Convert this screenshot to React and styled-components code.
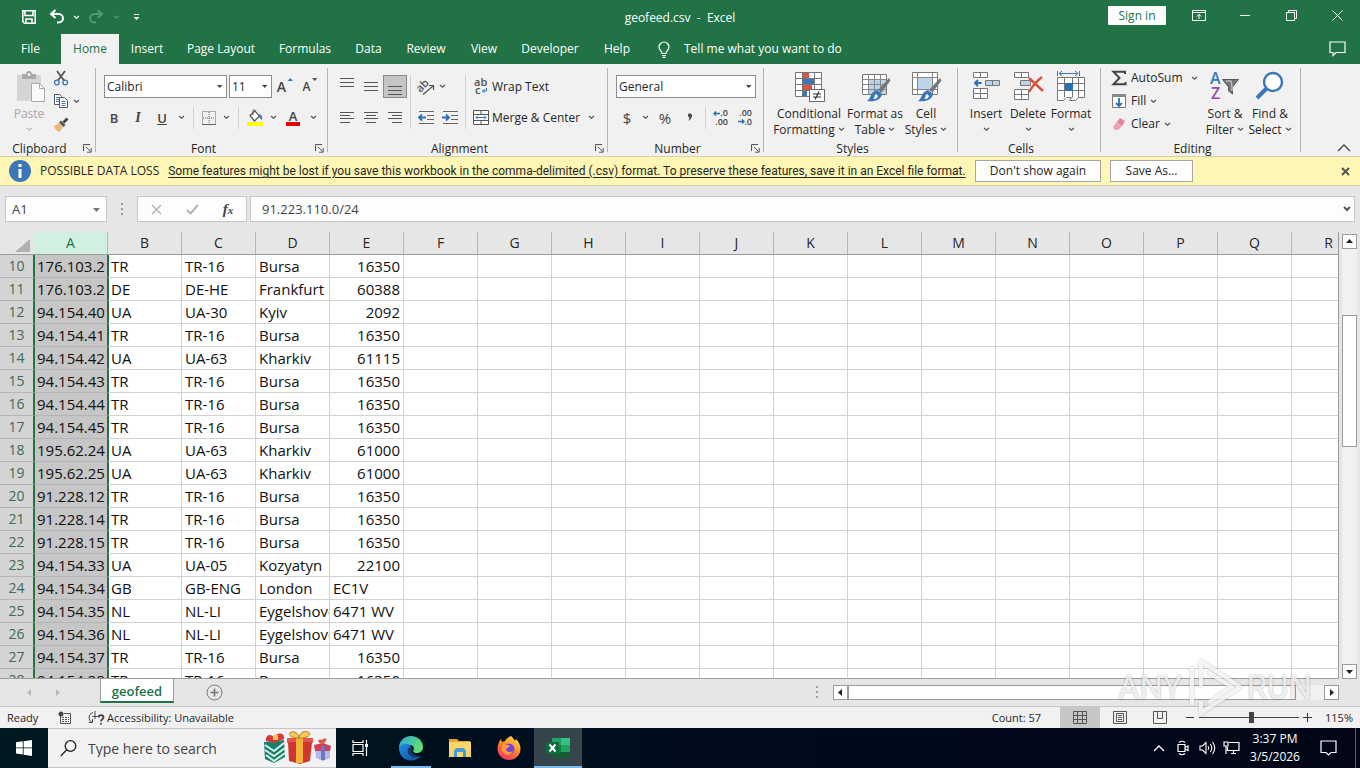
import styled, { createGlobalStyle } from "styled-components";

const COLUMNS = "ABCDEFGHIJKLMNOPQR".split("");

const ROWS = [
  [10, "176.103.2", "TR", "TR-16", "Bursa", 16350],
  [11, "176.103.2", "DE", "DE-HE", "Frankfurt", 60388],
  [12, "94.154.40", "UA", "UA-30", "Kyiv", 2092],
  [13, "94.154.41", "TR", "TR-16", "Bursa", 16350],
  [14, "94.154.42", "UA", "UA-63", "Kharkiv", 61115],
  [15, "94.154.43", "TR", "TR-16", "Bursa", 16350],
  [16, "94.154.44", "TR", "TR-16", "Bursa", 16350],
  [17, "94.154.45", "TR", "TR-16", "Bursa", 16350],
  [18, "195.62.24", "UA", "UA-63", "Kharkiv", 61000],
  [19, "195.62.25", "UA", "UA-63", "Kharkiv", 61000],
  [20, "91.228.12", "TR", "TR-16", "Bursa", 16350],
  [21, "91.228.14", "TR", "TR-16", "Bursa", 16350],
  [22, "91.228.15", "TR", "TR-16", "Bursa", 16350],
  [23, "94.154.33", "UA", "UA-05", "Kozyatyn", 22100],
  [24, "94.154.34", "GB", "GB-ENG", "London", "EC1V"],
  [25, "94.154.35", "NL", "NL-LI", "Eygelshoven", "6471 WV"],
  [26, "94.154.36", "NL", "NL-LI", "Eygelshoven", "6471 WV"],
  [27, "94.154.37", "TR", "TR-16", "Bursa", 16350],
  [28, "94.154.38", "TR", "TR-16", "Bursa", 16350],
];

const TABS = [
  ["File", 61],
  ["Home", 58],
  ["Insert", 56],
  ["Page Layout", 92],
  ["Formulas", 76],
  ["Data", 51],
  ["Review", 64],
  ["View", 52],
  ["Developer", 80],
  ["Help", 54],
];

/* icons */

const Svg = ({ w = 16, h = w, children, ...rest }) => (
  <svg
    width={w}
    height={h}
    viewBox={`0 0 ${w} ${h}`}
    fill="none"
    stroke="currentColor"
    aria-hidden="true"
    {...rest}
  >
    {children}
  </svg>
);

const Chevron = ({ color = "#555" }) => (
  <Svg w={7} h={5} stroke={color} strokeWidth="1.2">
    <path d="M1 1l2.5 2.3L6 1" />
  </Svg>
);

const Triangle = ({ dir = "down", color = "#222", small }) => {
  const turn = { down: 0, left: 90, up: 180, right: 270 }[dir];
  return (
    <Svg w={9} stroke="none" fill={color}>
      <path
        d={small ? "M2 3h5.500L4.700 6z" : "M1 3h7L4.500 7z"}
        transform={`rotate(${turn} 4.500 4.500)`}
      />
    </Svg>
  );
};

const Dots = () => (
  <Svg w={3} h={13} stroke="none" fill="#9b9b9b">
    <path d="M0 0h2v2H0zM0 5h2v2H0zM0 10h2v2H0z" />
  </Svg>
);

const SaveIcon = () => (
  <Svg strokeWidth="1.600">
    <path d="M1.800 1.800h12.400v12.400H3.500l-1.700-1.700z" />
    <path d="M4 2v4.500h8V2M5 14v-4h6v4" />
  </Svg>
);

const UndoIcon = ({ flip }) => (
  <Svg strokeWidth="2">
    <g transform={flip ? "translate(16 0) scale(-1 1)" : undefined}>
      <path d="M6.500 1L2 5l4.500 4" />
      <path d="M2 5h7.500c6 0 6 8.500 0 8.500H8" />
    </g>
  </Svg>
);

const CustomizeIcon = () => (
  <Svg w={7} h={8}>
    <path d="M1 1.500h5" />
    <path d="M.5 4h6L3.500 7z" fill="currentColor" stroke="none" />
  </Svg>
);

const RibbonOptionsIcon = () => (
  <Svg w={14} h={11}>
    <path d="M.5.5h13v10H.5zM.5 2.500h13M7 9V4.500M4.800 6.500L7 4.300l2.200 2.200" />
  </Svg>
);

const BulbIcon = () => (
  <Svg w={12} h={17} strokeWidth="1.200">
    <path d="M4 12.500c0-2.500-3-3.200-3-6.500a5 5 0 0 1 10 0c0 3.300-3 4-3 6.500zM4 14.500h4M4.500 16.400h3" />
  </Svg>
);

const CommentIcon = () => (
  <Svg w={17} h={15} strokeWidth="1.200">
    <path d="M1 1h15v10.500H7l-3 3v-3H1z" />
  </Svg>
);

const PasteIcon = () => (
  <Svg w={32} stroke="none">
    <path d="M4 4h24v26H4z" fill="#d6d4d6" />
    <path d="M9 3h4a3 3 0 0 1 6 0h4v5H9z" fill="#a9a9a9" />
    <circle cx="16" cy="3.500" r="1.500" fill="#f1f1f1" />
    <path d="M18.500 12.500h8l5 5v13h-13z" fill="#fafafa" stroke="#a9a9a9" />
    <path d="M26.500 12.500v5h5" stroke="#a9a9a9" />
  </Svg>
);

const CutIcon = () => (
  <Svg>
    <path d="M4 1l7.500 10M12 1L4.500 11" stroke="#555" strokeWidth="1.800" />
    <circle cx="3.800" cy="12.500" r="2.300" stroke="#3b76b8" strokeWidth="1.300" />
    <circle cx="12.200" cy="12.500" r="2.300" stroke="#3b76b8" strokeWidth="1.300" />
  </Svg>
);

const CopyIcon = () => (
  <Svg stroke="#50565e">
    <path d="M1.500 1.500h5l2 2v8h-7z" fill="#fff" />
    <path d="M6.500 4.500h5l3 3v7h-8z" fill="#fff" />
    <path d="M3 4.500h3M3 6.500h3M3 8.500h3M8.500 8.500h4M8.500 10.500h4M8.500 12.500h4" stroke="#3b76b8" />
  </Svg>
);

const BrushIcon = () => (
  <Svg stroke="none">
    <path d="M1 10l5-3 4 4-3 4.500c-2 .5-5-2-6-5.500z" fill="#e6b979" />
    <path d="M6 6.500l2-2 4.500 4.500-2 2z" fill="#555" />
    <path d="M9.500 5.500l4-4 2 2-4 4z" fill="#444" />
  </Svg>
);

const LauncherIcon = () => (
  <Svg w={9} stroke="#555">
    <path d="M.5 7V.5H7M3 3l4.500 4.500M8.200 4v4.200H4" />
  </Svg>
);

const BordersIcon = () => (
  <Svg w={14} stroke="#666">
    <path d="M.5.5h13v13H.5zM7 1v12M1 7h12" strokeDasharray="1 1" />
    <path d="M0 13.500h14" />
  </Svg>
);

const FillIcon = () => (
  <Svg w={18}>
    <path d="M4 6.500L9 2l4.500 5-5 5z" stroke="#555" fill="#fff" strokeWidth="1.200" />
    <path d="M7 6V1.500c0-1 2-1 2 0V3" stroke="#555" />
    <path d="M13 5c3 1 3.500 3 3 6-1-1-3-2-3-4z" fill="#3b76b8" stroke="none" />
    <path d="M1 13h16v4H1z" fill="#ffff00" stroke="none" />
  </Svg>
);

const AlignIcon = ({ lines }) => (
  <Svg w={16} h={18} stroke="#555">
    {lines.map(([x1, x2, y]) => (
      <path key={y} d={`M${x1} ${y}.5H${x2}`} />
    ))}
  </Svg>
);

const IndentIcon = ({ right }) => (
  <Svg w={17} h={14} stroke="#666">
    <path d="M1 .5h15M9 4.500h7M9 8.500h7M1 12.500h15" />
    <path
      d={right ? "M0 6.500h7M4 3.500l3 3-3 3" : "M1 6.500h7M4 3.500l-3 3 3 3"}
      stroke="#2b6fb5"
      strokeWidth="1.800"
    />
  </Svg>
);

const OrientationIcon = () => (
  <Svg w={18} h={18}>
    <path d="M6 16.500L16 8M12 7.500h4.500V12" stroke="#555" strokeWidth="1.200" />
    <text
      x="2"
      y="14"
      transform="rotate(-45 4 13)"
      fontFamily="Open Sans"
      fontSize="11"
      fontWeight="600"
      fill="#555"
      stroke="none"
    >
      ab
    </text>
  </Svg>
);

const WrapIcon = () => (
  <Svg w={16} h={18}>
    <g fontFamily="Open Sans" fontSize="11" fontWeight="600" fill="#555" stroke="none">
      <text x="1" y="8">ab</text>
      <text x="2" y="16">c</text>
    </g>
    <path d="M13.500 10v3H9.500M11.500 11l-2 2 2 2" stroke="#2b6fb5" />
  </Svg>
);

const MergeIcon = () => (
  <Svg w={16} stroke="#555">
    <path d="M.5.5h15v14H.5zM.5 4.500h15M.5 10.500h15M8 .5v4M8 10.500v4" fill="#fff" />
    <path d="M3 7.500h10M5 5.500l-2 2 2 2M11 5.500l2 2-2 2" stroke="#3b76b8" />
  </Svg>
);

const DecimalIcon = ({ fewer }) => (
  <Svg w={18} h={17}>
    <g fontFamily="Open Sans" fontSize="9" fontWeight="600" fill="#444" stroke="none" textAnchor="end">
      <text x="16" y="7">{fewer ? ".00" : ".0"}</text>
      <text x="16" y="16">{fewer ? ".0" : ".00"}</text>
    </g>
    <path
      d={fewer ? "M2 12.500h6M6 10.500l2 2-2 2" : "M2 4.500h6M4 2.500l-2 2 2 2"}
      stroke="#2b6fb5"
      strokeWidth="1.400"
    />
  </Svg>
);

const ConditionalIcon = () => (
  <Svg w={32}>
    <path d="M2.500 1.500h26v24h-26z" fill="#fff" stroke="#777" />
    <g stroke="none">
      <path d="M10 2h6v6h-6zM10 14h9v6h-9z" fill="#d9534a" />
      <path d="M10 8h11v6H10zM10 20h4v5h-4z" fill="#3b76b8" />
    </g>
    <path d="M2.500 7.500h26M2.500 13.500h26M2.500 19.500h26M9.500 1.500v24M21.500 1.500v24" stroke="#777" />
    <path d="M16.500 18.500h15v12h-15z" fill="#fff" stroke="#666" />
    <path d="M20 23h8M20 26h8M26 20.500l-4 8" stroke="#333" strokeWidth="1.200" />
  </Svg>
);

const PaintBrush = () => (
  <g stroke="none">
    <path d="M30 7l1.500 2.500-9 12-3.500-2.500z" fill="#777" />
    <path d="M18 19l5 4c-1 6-7 8-15 7 4-2 3-9 10-11z" fill="#3b76b8" />
    <path d="M17 23l2 2c-1 3-3 3-5 3 2-1 1-4 3-5z" fill="#fff" />
  </g>
);

const FormatTableIcon = () => (
  <Svg w={32}>
    <path d="M3.500 3.500h24v20h-24z" fill="#fff" stroke="#777" />
    <path d="M10 9h17v14H10z" fill="#bdd3e9" stroke="none" />
    <path d="M3.500 8.500h24M3.500 13.500h24M3.500 18.500h24M9.500 3.500v20M15.500 3.500v20M21.500 3.500v20" stroke="#888" />
    <PaintBrush />
  </Svg>
);

const CellStylesIcon = () => (
  <Svg w={32}>
    <path d="M2.500 1.500h25v22h-25z" fill="#fff" stroke="#777" />
    <path d="M8 7h15v11H8z" fill="#bdd3e9" stroke="none" />
    <path d="M2.500 6.500h25M2.500 18.500h25M7.500 1.500v22M22.500 1.500v22" stroke="#888" />
    <PaintBrush />
  </Svg>
);

const InsertCellsIcon = () => (
  <Svg w={32} stroke="#777">
    <path d="M3.500 1.500h14v5h-14zM10.500 1.500v5M3.500 17.500h14v10h-14zM3.500 22.500h14M10.500 17.500v10" fill="#fff" />
    <path d="M15.500 9.500h14v5h-14zM22.500 9.500v5" fill="#bdd3e9" />
    <path d="M4.500 12h7M8 9l-3 3 3 3" stroke="#2b6fb5" strokeWidth="2" />
  </Svg>
);

const DeleteCellsIcon = () => (
  <Svg w={32} stroke="#777">
    <path d="M2.500 1.500h14v5h-14zM9.500 1.500v5M2.500 18.500h14v10h-14zM2.500 23.500h14M9.500 18.500v10" fill="#fff" />
    <path d="M8.500 9.500h10v5h-10z" fill="#bdd3e9" />
    <path d="M17 7l14 13M30 6C26 9 21 14 17 21" stroke="#d9543c" strokeWidth="2.400" />
  </Svg>
);

const FormatCellsIcon = () => (
  <Svg w={32} stroke="#777">
    <path d="M2.500 6.500h27v20h-6l-3 3h-6l2-3h-5l-3 3h-6z" fill="#fff" />
    <path d="M2.500 12.500h27M2.500 19.500h27M9.500 6.500v20M17.500 6.500v20M23.500 6.500v20" />
    <path d="M10 12h8v8h-8z" fill="#2b6fb5" stroke="none" />
    <path d="M2.500 0v5M24.500 0v5M4 2.500h19M7 0L4 2.500 7 5M20 0l3 2.500L20 5" stroke="#3b76b8" />
  </Svg>
);

const SumIcon = () => (
  <Svg strokeWidth="2" stroke="#444">
    <path d="M14 4V1.800H2.500L8.500 8l-6 6.200H14.500V12" />
  </Svg>
);

const FillDownIcon = () => (
  <Svg>
    <path d="M1.500 1.500h13v13h-13z" fill="#fff" stroke="#777" />
    <path d="M1 1h14v3H1z" fill="#888" stroke="none" />
    <path d="M8 5v8M5 10l3 3 3-3" stroke="#2b6fb5" strokeWidth="1.800" />
  </Svg>
);

const EraserIcon = () => (
  <Svg stroke="none">
    <path d="M9 2l5 3-3 5-5-4z" fill="#e8819a" />
    <path d="M6 6l5 4-4 4H4L2 11z" fill="#eda0b1" />
  </Svg>
);

const SortIcon = () => (
  <Svg w={32}>
    <g fontFamily="Open Sans" fontSize="16" fontWeight="600" stroke="none">
      <text x="1" y="13" fill="#3b76b8">A</text>
      <text x="2" y="28" fill="#9449b0">Z</text>
    </g>
    <path d="M13.500 8.500h16l-6 7.500v7l-4-3v-4z" fill="#777" stroke="#555" />
    <path d="M17 10h5l1 6v4" stroke="#bbb" strokeWidth="1.500" />
  </Svg>
);

const FindIcon = () => (
  <Svg w={32} stroke="#3b76b8">
    <path d="M12 18L3 27" strokeWidth="4" />
    <circle cx="19" cy="11" r="9" fill="#fff" strokeWidth="2.400" />
  </Svg>
);

const MacroIcon = () => (
  <Svg w={14} h={14} stroke="#555">
    <path d="M2.500 5v7.500h10v-10H6" />
    <path d="M4 6.500h7M4 8.500h7M4 10.500h7" strokeDasharray="2 1" />
    <circle cx="3" cy="3" r="2.500" fill="#444" stroke="none" />
  </Svg>
);

const AccessIcon = () => (
  <Svg w={17} h={14} stroke="#444">
    <path d="M5 1.500C0 3 0 9 4 11.500M1 11.500h3.500V8M7 0v8M4.500 5.500h5" />
    <path d="M10.500 6.500c0-3 5-3 5 0 0 2-2.500 1.500-2.500 4M13 12v1.500" strokeWidth="1.800" />
  </Svg>
);

const NormalViewIcon = () => (
  <Svg w={14} h={13} stroke="#555">
    <path d="M.5.5h13v12H.5zM.5 4.500h13M.5 8.500h13M4.500.5v12M9.500.5v12" />
  </Svg>
);

const PageViewIcon = () => (
  <Svg w={14} h={13} stroke="#555">
    <path d="M.5.5h13v12H.5zM3.500 2.500h7v8h-7zM5 4.500h4M5 6.500h4M5 8.500h4" />
  </Svg>
);

const BreakViewIcon = () => (
  <Svg w={14} h={13} stroke="#555">
    <path d="M.5.5h13v12H.5zM4.500.5v7M9.500.5v7M4.500 7.500h5" />
  </Svg>
);

const WindowsIcon = () => (
  <Svg w={16} stroke="none" fill="#fff">
    <path d="M0 2.300L6.800 1.300v6.200H0zM7.600 1.200L16 0v7.500H7.600zM0 8.300h6.800v6.300L0 13.600zM7.600 8.300H16V16l-8.400-1.200z" />
  </Svg>
);

const SearchIcon = () => (
  <Svg w={17} h={17} stroke="#222" strokeWidth="1.300">
    <circle cx="10.500" cy="6" r="5.300" />
    <path d="M6.700 9.800L.8 16" />
  </Svg>
);

const GiftsIcon = () => (
  <Svg w={70} h={34} stroke="none">
    <path d="M2 11l20-2 1 17-11 6-9-4z" fill="#17806d" />
    <path d="M3 14l9 6 10-8M3 19l9 6 11-8M4 24l8 6 11-8" stroke="#d9f2e6" strokeWidth="2" fill="none" />
    <path d="M4 10c-1-7 6-8 8-3 2-6 11-6 10 1l-10 4z" fill="#d8383b" />
    <path d="M11 4h5v5h-5z" fill="#f3c64a" />
    <path d="M25 7h26v5H25z" fill="#e4574c" />
    <path d="M26 11h24l-2 19-10 3-11-3z" fill="#d0352f" />
    <path d="M34 6h7v26h-7z" fill="#f3b23e" />
    <path d="M37 7C29 8 24 2 30 1c4-1 7 3 7 6 0-4 4-8 9-6 5 2-1 7-9 6z" fill="#f7c95b" stroke="#b97b1c" />
    <path d="M53 17h15v10l-7 3-7-3z" fill="#b4b8ea" />
    <path d="M52 14l9-2 8 3-1 5H53z" fill="#ce3f58" />
    <path d="M59 15h4v14h-4z" fill="#6d74c4" />
    <path d="M60 13c-5-1-5-6 0-4 4-4 7 0 1 4z" fill="#e4574c" />
  </Svg>
);

const TaskViewIcon = () => (
  <Svg w={17} h={16} stroke="#fff" strokeWidth="1.200">
    <path d="M1 0v2.500h10V0M1 16v-2.500h10V16M1 4.500h10v7H1zM14.500 0v16" />
    <path d="M13 4h3v3h-3z" fill="#fff" stroke="none" />
  </Svg>
);

const EdgeIcon = () => (
  <Svg w={26} stroke="none">
    <defs>
      <linearGradient id="edge-top" x1="0" x2="1" y1="0" y2=".4">
        <stop offset="0" stopColor="#2aa7e0" />
        <stop offset="1" stopColor="#5fdf6f" />
      </linearGradient>
      <linearGradient id="edge-low" x1="0" x2="1" y1="0" y2="1">
        <stop offset="0" stopColor="#1f8fe0" />
        <stop offset="1" stopColor="#0f4a9c" />
      </linearGradient>
    </defs>
    <path d="M1 13C1 6 6 1 13 1s12 5 12 11c0 4-3 6-6.500 6-3 0-4-1.500-3-3 1-1.500.5-5-4-5S2 12 1 13z" fill="url(#edge-top)" />
    <path d="M1 13c1-3 5-5 8-4 3 0 4 2 4 3-4 0-5 9 4 10 3 .3 5-.5 6.500-1.500C21 24 17 25.500 13 25.500 6 25.500 1 20 1 13z" fill="url(#edge-low)" />
    <path d="M12.500 11.500c-3 1-4.500 6 0 9 3 2 8 1.500 11 0-3 1-8 0-9.500-3-1-2 1-3.500-1.500-6z" fill="#123c6e" />
  </Svg>
);

const FolderIcon = () => (
  <Svg w={24} h={22} stroke="none">
    <path d="M1 2h8l2 2h11v16H1z" fill="#e8a33a" />
    <path d="M1 5h22v15H1z" fill="#fbd569" />
    <path d="M6 20v-6l2-3h8l2 3v6h-3v-5H9v5z" fill="#3f9bdc" />
  </Svg>
);

const FirefoxIcon = () => (
  <Svg w={24} stroke="none">
    <defs>
      <linearGradient id="fox" x1=".8" x2=".2" y1="0" y2="1">
        <stop offset="0" stopColor="#ffe14d" />
        <stop offset=".45" stopColor="#ff8b27" />
        <stop offset="1" stopColor="#f0246e" />
      </linearGradient>
    </defs>
    <path d="M14 0c2 2 3 3 4 5l1-2c3 3 4.500 6 4.500 10A11.500 11 0 0 1 .5 13C.5 9 2 5 4 3l1 3 3-1c1-2 3-4 6-5z" fill="url(#fox)" />
    <circle cx="12" cy="13" r="5.500" fill="#7a3fe0" />
    <path d="M5 9c3-2 6 0 8 1-1 2-3 1.500-4 3 0 3 4 4 7 2-2 5-9 5-11 0z" fill="#ff9a35" />
  </Svg>
);

const ExcelIcon = () => (
  <Svg w={26} h={22} stroke="none">
    <path d="M7 1h9v7H7z" fill="#21a366" />
    <path d="M16 1h9v7h-9z" fill="#33c481" />
    <path d="M7 8h9v7H7z" fill="#107c41" />
    <path d="M16 8h9v7h-9z" fill="#21a366" />
    <path d="M7 15h18v6H7z" fill="#185c37" />
    <path d="M1 5h13v12H1z" fill="#0f6b39" />
    <path d="M4.500 7.500l6 7M10.500 7.500l-6 7" stroke="#fff" strokeWidth="2" />
  </Svg>
);

const CameraIcon = () => (
  <Svg w={12} h={16} stroke="#fff" strokeWidth="1.200">
    <path d="M1 4.500h7v7H1zM8 7.500l3-1.500v4.500L8 9M2 2.500Q5 0 8 2.500M2 13.500Q5 16 8 13.500" />
  </Svg>
);

const SoundIcon = () => (
  <Svg w={17} h={14} stroke="#fff" strokeWidth="1.100">
    <path d="M1 5h2.500L7 1.500v11L3.500 9H1zM9 5q1.500 2 0 4M11.300 3q3 4 0 8M13.500 1q4.500 6 0 12" />
  </Svg>
);

const NetworkIcon = () => (
  <Svg w={17} h={14} stroke="#fff" strokeWidth="1.200">
    <path d="M6 1.500h10v8H4.500V6M8 12.500h5M10.500 9.500v3M1 1h4v4H1zM3 5v8" />
  </Svg>
);

const NoticeIcon = () => (
  <Svg w={17} h={16} stroke="#fff" strokeWidth="1.200">
    <path d="M1 1h15v11.500h-5L8.500 15 6 12.500H1z" />
  </Svg>
);

const PlayMark = () => (
  <Svg w={62} h={66} strokeWidth="4" strokeLinejoin="round">
    <path d="M8 12v38M17 32V6l39 26-39 26V46M24 17l24 15-24 16" />
  </Svg>
);

/* parts */

const BigCommand = ({ icon, lines, width, disabled }) => (
  <BigButton $width={width} disabled={disabled}>
    {icon}
    <span>{lines[0]}</span>
    <span>
      {lines[1]} <Chevron color={disabled ? "#bbb" : "#555"} />
    </span>
  </BigButton>
);

const Group = ({ label, width, pad, launcher, children }) => (
  <>
    <StyledGroup $width={width}>
      <GroupBody $pad={pad}>{children}</GroupBody>
      <GroupLabel>
        <span>{label}</span>
        {launcher && (
          <Launcher aria-label={`${label} settings`}>
            <LauncherIcon />
          </Launcher>
        )}
      </GroupLabel>
    </StyledGroup>
    <GroupLine />
  </>
);

const Dropdown = ({ label, value, width }) => (
  <SelectBox $width={width}>
    <select aria-label={label} defaultValue={value}>
      <option>{value}</option>
    </select>
    <Triangle small color="#444" />
  </SelectBox>
);

const More = ({ label, color, width = 14 }) => (
  <Tool $width={width} aria-label={label}>
    <Chevron color={color} />
  </Tool>
);

const App = () => {
  return (
    <>
      <GlobalStyle />
      <Screen>
        <TitleBar>
          <QuickAccess>
            <Tool $width={26} aria-label="Save"><SaveIcon /></Tool>
            <Tool $width={30} aria-label="Undo"><UndoIcon /></Tool>
            <More label="Undo history" color="#fff" width={8} />
            <Tool $width={32} aria-label="Redo" disabled><UndoIcon flip /></Tool>
            <More label="Redo history" color="#4f9a70" width={8} />
            <Tool $width={32} aria-label="Customize"><CustomizeIcon /></Tool>
          </QuickAccess>
          <Title>geofeed.csv&nbsp; -&nbsp; Excel</Title>
          <WindowButtons>
            <SignIn>Sign in</SignIn>
            <Tool $width={46} aria-label="Ribbon options"><RibbonOptionsIcon /></Tool>
            <Tool $width={46} aria-label="Minimize">
              <Svg w={10}><path d="M0 4.500h10" /></Svg>
            </Tool>
            <Tool $width={46} aria-label="Restore">
              <Svg w={11}><path d="M.5 2.500h8v8h-8zM2.500 2.500v-2h8v8h-2" /></Svg>
            </Tool>
            <Tool $width={46} aria-label="Close">
              <Svg w={11}><path d="M.5.5l10 10M10.500.5l-10 10" /></Svg>
            </Tool>
          </WindowButtons>
        </TitleBar>

        <TabBar>
          {TABS.map(([name, width]) => (
            <Tab key={name} $width={width} $active={name === "Home"}>
              {name}
            </Tab>
          ))}
          <TellMe><BulbIcon />Tell me what you want to do</TellMe>
          <Tool $width={46} aria-label="Comments"><CommentIcon /></Tool>
        </TabBar>

        <Ribbon>
          <Group label="Clipboard" width={95} pad={8} launcher>
            <BigCommand icon={<PasteIcon />} lines={["Paste", ""]} width={42} disabled />
            <Stack>
              <SmallButton aria-label="Cut"><CutIcon /></SmallButton>
              <SmallButton aria-label="Copy"><CopyIcon /><Chevron /></SmallButton>
              <SmallButton aria-label="Format Painter"><BrushIcon /></SmallButton>
            </Stack>
          </Group>

          <Group label="Font" width={231} pad={6} launcher>
            <Rows>
              <ToolRow $inset>
                <Dropdown label="Font" value="Calibri" width={123} />
                <Dropdown label="Font size" value="11" width={43} />
                <Tool $width={24} aria-label="Increase font size">
                  <Glyph $size={14}>A</Glyph><Triangle small dir="up" color="#3b76b8" />
                </Tool>
                <Tool $width={22} aria-label="Decrease font size">
                  <Glyph $size={12}>A</Glyph><Triangle small color="#555" />
                </Tool>
              </ToolRow>
              <ToolRow>
                <Tool $width={24}><Glyph $size={13}>B</Glyph></Tool>
                <Tool $width={24}><Glyph $size={14} $italic>I</Glyph></Tool>
                <Tool $width={24}><Glyph $size={13} $underline>U</Glyph></Tool>
                <More label="Underline style" />
                <ToolLine $gap={5} />
                <Tool $width={20} aria-label="Borders"><BordersIcon /></Tool>
                <More label="Border style" />
                <ToolLine $gap={5} />
                <Tool $width={22} aria-label="Fill color"><FillIcon /></Tool>
                <More label="Fill colors" />
                <Tool $width={26}><Glyph $size={13} $bar="#e60000">A</Glyph></Tool>
                <More label="Font colors" />
              </ToolRow>
            </Rows>
          </Group>

          <Group label="Alignment" width={279} pad={7} launcher>
            <Rows>
              <ToolRow>
                <Tool $width={24} aria-label="Top align">
                  <AlignIcon lines={[[1, 15, 0], [1, 15, 4], [1, 15, 8]]} />
                </Tool>
                <Tool $width={24} aria-label="Middle align">
                  <AlignIcon lines={[[1, 15, 4], [1, 15, 8], [1, 15, 12]]} />
                </Tool>
                <Tool $width={24} $pressed aria-label="Bottom align">
                  <AlignIcon lines={[[1, 15, 8], [1, 15, 12], [1, 15, 16]]} />
                </Tool>
              </ToolRow>
              <ToolRow>
                <Tool $width={24} aria-label="Align left">
                  <AlignIcon lines={[[1, 15, 3], [1, 11, 6], [1, 15, 9], [1, 11, 13]]} />
                </Tool>
                <Tool $width={24} aria-label="Center">
                  <AlignIcon lines={[[1, 15, 3], [3, 13, 6], [1, 15, 9], [3, 13, 13]]} />
                </Tool>
                <Tool $width={24} aria-label="Align right">
                  <AlignIcon lines={[[1, 15, 3], [5, 15, 6], [1, 15, 9], [5, 15, 13]]} />
                </Tool>
              </ToolRow>
            </Rows>
            <ToolLine $gap={3} $tall />
            <Rows>
              <ToolRow>
                <Tool $width={24} aria-label="Orientation"><OrientationIcon /></Tool>
                <More label="Orientation options" width={8} />
              </ToolRow>
              <ToolRow>
                <Tool $width={24} aria-label="Decrease indent"><IndentIcon /></Tool>
                <Tool $width={24} aria-label="Increase indent"><IndentIcon right /></Tool>
              </ToolRow>
            </Rows>
            <ToolLine $gap={3} $tall />
            <Rows>
              <ToolRow>
                <TextTool><WrapIcon />Wrap Text</TextTool>
              </ToolRow>
              <ToolRow>
                <TextTool><MergeIcon />Merge &amp; Center</TextTool>
                <More label="Merge options" />
              </ToolRow>
            </Rows>
          </Group>

          <Group label="Number" width={155} pad={8} launcher>
            <Rows>
              <ToolRow>
                <Dropdown label="Number format" value="General" width={140} />
              </ToolRow>
              <ToolRow>
                <Tool $width={22}><Glyph $size={15} $light>$</Glyph></Tool>
                <More label="Currency" />
                <Tool $width={26}><Glyph $size={15} $light>%</Glyph></Tool>
                <Tool $width={24} aria-label="Comma style">
                  <Svg w={6} h={10} stroke="none" fill="#444">
                    <path d="M1 1.500C1 0 5 0 5 2.500S3.500 7 1 8C2 7 2.500 5.500 2.500 4.500 1.500 4.500 1 3.500 1 1.500z" />
                  </Svg>
                </Tool>
                <ToolLine $gap={3} />
                <Tool $width={24} aria-label="Increase decimal"><DecimalIcon /></Tool>
                <Tool $width={24} aria-label="Decrease decimal"><DecimalIcon fewer /></Tool>
              </ToolRow>
            </Rows>
          </Group>

          <Group label="Styles" width={193} pad={7}>
            <BigCommand icon={<ConditionalIcon />} lines={["Conditional", "Formatting"]} width={76} />
            <BigCommand icon={<FormatTableIcon />} lines={["Format as", "Table"]} width={56} />
            <BigCommand icon={<CellStylesIcon />} lines={["Cell", "Styles"]} width={46} />
          </Group>

          <Group label="Cells" width={142} pad={7}>
            <BigCommand icon={<InsertCellsIcon />} lines={["Insert", ""]} width={42} />
            <BigCommand icon={<DeleteCellsIcon />} lines={["Delete", ""]} width={42} />
            <BigCommand icon={<FormatCellsIcon />} lines={["Format", ""]} width={44} />
          </Group>

          <Group label="Editing" width={199} pad={10}>
            <Stack $width={92}>
              <SmallButton $wide><SumIcon />AutoSum<Chevron /></SmallButton>
              <SmallButton><FillDownIcon />Fill<Chevron /></SmallButton>
              <SmallButton><EraserIcon />Clear<Chevron /></SmallButton>
            </Stack>
            <BigCommand icon={<SortIcon />} lines={["Sort &", "Filter"]} width={44} />
            <BigCommand icon={<FindIcon />} lines={["Find &", "Select"]} width={46} />
          </Group>

          <Collapse aria-label="Collapse ribbon">
            <Svg w={14} h={8} stroke="#444"><path d="M1 7l6-6 6 6" strokeWidth="1.300" /></Svg>
          </Collapse>
        </Ribbon>

        <MessageBar>
          <Svg w={22} stroke="none">
            <circle cx="11" cy="11" r="11" fill="#3a76b8" />
            <path d="M9.500 4h3v3h-3zM9.500 9h3v9h-3z" fill="#fff" />
          </Svg>
          <strong>POSSIBLE DATA LOSS</strong>
          <a href="#save">
            Some features might be lost if you save this workbook in the comma-delimited (.csv) format. To preserve these features, save it in an Excel file format.
          </a>
          <MessageButton $width={126}>Don't show again</MessageButton>
          <MessageButton $width={83}>Save As...</MessageButton>
          <CloseMessage aria-label="Close message">
            <Svg w={9} stroke="#555" strokeWidth="2"><path d="M1 1l7 7M8 1L1 8" /></Svg>
          </CloseMessage>
        </MessageBar>

        <FormulaBar>
          <NameBox>
            <input aria-label="Name box" defaultValue="A1" />
            <Triangle color="#777" />
          </NameBox>
          <Dots />
          <FormulaButtons>
            <Tool $width={36} aria-label="Cancel">
              <Svg w={11} stroke="#b5b5b5" strokeWidth="1.600"><path d="M1 1l9 9M10 1l-9 9" /></Svg>
            </Tool>
            <Tool $width={36} aria-label="Enter">
              <Svg w={13} h={11} stroke="#b5b5b5" strokeWidth="2"><path d="M1 6l3.500 3.500L12 1" /></Svg>
            </Tool>
            <Tool $width={36}><Fx>f<sub>x</sub></Fx></Tool>
          </FormulaButtons>
          <FormulaBox>
            <input aria-label="Formula" defaultValue="91.223.110.0/24" />
            <Svg w={8} h={6} stroke="#555" strokeWidth="2"><path d="M1 1l3 3 3-3" /></Svg>
          </FormulaBox>
        </FormulaBar>

        <Workspace>
          <SheetView>
            <Sheet>
              <thead>
                <tr>
                  <CornerCell aria-label="Select all">
                    <Svg w={15} h={13} stroke="none" fill="#b1b1b1"><path d="M15 0v13H0z" /></Svg>
                  </CornerCell>
                  {COLUMNS.map((c) => (
                    <ColumnHead key={c} $selected={c === "A"}>{c}</ColumnHead>
                  ))}
                </tr>
              </thead>
              <tbody>
                {ROWS.map(([number, ...values]) => (
                  <tr key={number}>
                    <RowHead>{number}</RowHead>
                    {COLUMNS.map((c, i) => (
                      <Cell key={c} $selected={i === 0} $number={typeof values[i] === "number"}>
                        {values[i]}
                      </Cell>
                    ))}
                  </tr>
                ))}
              </tbody>
            </Sheet>
          </SheetView>
          <VerticalScroll>
            <ScrollButton aria-label="Scroll up"><Triangle dir="up" /></ScrollButton>
            <Track $grow={66} />
            <Thumb $grow={131} />
            <Track $grow={218} />
            <ScrollButton aria-label="Scroll down"><Triangle /></ScrollButton>
          </VerticalScroll>
        </Workspace>

        <SheetTabs>
          <SheetNav>
            <Tool $width={28} aria-label="Previous sheet"><Triangle dir="left" color="#b9b9b9" /></Tool>
            <Tool $width={28} aria-label="Next sheet"><Triangle dir="right" color="#b9b9b9" /></Tool>
          </SheetNav>
          <SheetTab>geofeed</SheetTab>
          <NewSheet aria-label="New sheet">
            <Svg w={17} stroke="#777">
              <circle cx="8.500" cy="8.500" r="7.500" />
              <path d="M8.500 4.500v8M4.500 8.500h8" strokeWidth="1.600" />
            </Svg>
          </NewSheet>
          <Dots />
          <HorizontalScroll>
            <ScrollButton aria-label="Scroll left"><Triangle dir="left" /></ScrollButton>
            <Thumb $grow={448} />
            <Track $grow={28} />
            <ScrollButton aria-label="Scroll right"><Triangle dir="right" /></ScrollButton>
          </HorizontalScroll>
        </SheetTabs>

        <StatusBar>
          <StatusText>Ready</StatusText>
          <MacroIcon />
          <Access><AccessIcon />Accessibility: Unavailable</Access>
          <Count>Count: 57</Count>
          <ViewButton $active aria-label="Normal"><NormalViewIcon /></ViewButton>
          <ViewButton aria-label="Page layout"><PageViewIcon /></ViewButton>
          <ViewButton aria-label="Page break preview"><BreakViewIcon /></ViewButton>
          <Tool $width={19} aria-label="Zoom out">
            <Svg w={9} stroke="#333"><path d="M1 4.500h8" /></Svg>
          </Tool>
          <ZoomSlider type="range" aria-label="Zoom" defaultValue={53} />
          <Tool $width={17} aria-label="Zoom in">
            <Svg w={9} stroke="#333"><path d="M0 4.500h9M4.500 0v9" /></Svg>
          </Tool>
          <ZoomValue>115%</ZoomValue>
        </StatusBar>

        <Taskbar>
          <TaskButton aria-label="Start"><WindowsIcon /></TaskButton>
          <SearchBox>
            <SearchIcon />
            <input aria-label="Search" placeholder="Type here to search" />
            <GiftsIcon />
          </SearchBox>
          <TaskButton aria-label="Task view"><TaskViewIcon /></TaskButton>
          <AppButtons>
            <TaskButton $open aria-label="Edge"><EdgeIcon /></TaskButton>
            <TaskButton aria-label="Explorer"><FolderIcon /></TaskButton>
            <TaskButton aria-label="Firefox"><FirefoxIcon /></TaskButton>
            <TaskButton $open $active aria-label="Excel"><ExcelIcon /></TaskButton>
          </AppButtons>
          <Tray>
            <Tool $width={24} aria-label="Hidden icons">
              <Svg w={12} h={7} stroke="#fff"><path d="M1 6l5-5 5 5" strokeWidth="1.300" /></Svg>
            </Tool>
            <Tool $width={24} aria-label="Meet now"><CameraIcon /></Tool>
            <Tool $width={24} aria-label="Volume"><SoundIcon /></Tool>
            <Tool $width={24} aria-label="Network"><NetworkIcon /></Tool>
            <Clock><span>3:37 PM</span><span>3/5/2026</span></Clock>
            <Tool $width={42} aria-label="Notifications"><NoticeIcon /></Tool>
            <ShowDesktop aria-label="Show desktop" />
          </Tray>
        </Taskbar>

        <Watermark><span>ANY</span><PlayMark /><span>RUN</span></Watermark>
      </Screen>
    </>
  );
};

export default App;

//style
const GlobalStyle = createGlobalStyle`
  * {
    box-sizing: border-box;
  }

  body {
    margin: 0;
    overflow: hidden;
    font: 12px/16px "Open Sans", "Noto Sans", sans-serif;
    color: #262626;
  }

  button, input, select {
    margin: 0;
    padding: 0;
    border: 0;
    border-radius: 0;
    background: none;
    font: inherit;
    color: inherit;
    outline: none;
  }

  svg {
    display: block;
    flex: none;
    overflow: visible;
  }
`;

const Screen = styled.div`
  position: relative;
  display: flex;
  flex-direction: column;
  height: 100vh;
  background: #e6e6e6;
`;

const Tool = styled.button`
  display: flex;
  flex: none;
  align-items: center;
  justify-content: center;
  width: ${(props) => props.$width}px;
  height: 23px;
  border: ${(props) => (props.$pressed ? "1px solid #8a8a8a" : "0")};
  background: ${(props) => (props.$pressed ? "#c5c5c5" : "none")};

  &:disabled {
    color: #4f9a70;
  }
`;

const TitleBar = styled.header`
  display: grid;
  grid-template-columns: 1fr auto 1fr;
  align-items: center;
  flex: none;
  height: 34px;
  background: #217346;
  color: #fff;
`;

const Title = styled.span`
  padding-top: 2px;
`;

const QuickAccess = styled.div`
  display: flex;
  padding-left: 16px;
`;

const WindowButtons = styled.div`
  display: flex;
  align-items: center;
  justify-content: flex-end;
  height: 31px;
  align-self: start;
`;

const SignIn = styled.button`
  width: 58px;
  height: 19px;
  margin-right: 10px;
  border-radius: 1px;
  background: #fff;
  color: #217346;
`;

const TabBar = styled.nav`
  display: flex;
  flex: none;
  height: 30px;
  background: #217346;
  color: #fff;

  > :last-child {
    height: 28px;
    margin-left: auto;
  }
`;

const Tab = styled.button`
  flex: none;
  width: ${(props) => props.$width}px;
  background: ${(props) => (props.$active ? "#f1f1f1" : "none")};
  color: ${(props) => (props.$active ? "#217346" : "#fff")};
`;

const TellMe = styled.button`
  display: flex;
  align-items: center;
  gap: 14px;
  padding-left: 14px;
`;

const Ribbon = styled.section`
  display: flex;
  flex: none;
  height: 93px;
  padding-top: 4px;
  border-bottom: 1px solid #d8d3a6;
  background: #f1f1f1;
`;

const StyledGroup = styled.div`
  display: flex;
  flex-direction: column;
  flex: none;
  width: ${(props) => props.$width}px;
`;

const GroupBody = styled.div`
  display: flex;
  height: 72px;
  padding-left: ${(props) => props.$pad}px;
`;

const GroupLabel = styled.div`
  display: flex;
  position: relative;
  align-items: center;
  justify-content: center;
  height: 16px;
  padding: 2px 16px 0 0;
`;

const Launcher = styled.button`
  position: absolute;
  right: 3px;
  top: 4px;
`;

const GroupLine = styled.i`
  flex: none;
  width: 1px;
  height: 84px;
  background: #b4b4b4;
`;

const Rows = styled.div`
  display: flex;
  flex-direction: column;
  gap: 8px;
  padding-top: 7px;
`;

const ToolRow = styled.div`
  display: flex;
  align-items: center;
  height: 23px;
  gap: ${(props) => (props.$inset ? "2px" : "0")};
  padding-left: ${(props) => (props.$inset ? "2px" : "0")};
`;

const ToolLine = styled.i`
  flex: none;
  width: 1px;
  height: ${(props) => (props.$tall ? "54px" : "22px")};
  margin: ${(props) => (props.$tall ? "7px" : "0")} ${(props) => props.$gap}px 0;
  background: #d2d2d2;
`;

const SelectBox = styled.div`
  display: flex;
  align-items: center;
  flex: none;
  width: ${(props) => props.$width}px;
  height: 23px;
  padding-right: 2px;
  border: 1px solid #8c8c8c;
  background: #fff;

  select {
    flex: 1;
    min-width: 0;
    padding-left: 2px;
    appearance: none;
  }
`;

const Glyph = styled.span`
  font-size: ${(props) => props.$size}px;
  font-weight: ${(props) => (props.$light ? 400 : 600)};
  font-style: ${(props) => (props.$italic ? "italic" : "normal")};
  font-family: ${(props) => (props.$italic ? '"Liberation Serif", serif' : "inherit")};
  text-decoration: ${(props) => (props.$underline ? "underline" : "none")};
  line-height: ${(props) => (props.$bar ? "12px" : "16px")};
  padding: ${(props) => (props.$bar ? "0 3px" : "0")};
  border-bottom: ${(props) => (props.$bar ? `4px solid ${props.$bar}` : "0")};
  color: #444;

  + svg {
    align-self: flex-start;
  }
`;

const TextTool = styled.button`
  display: flex;
  align-items: center;
  height: 23px;
  padding: 0 4px;
  gap: 3px;
  white-space: nowrap;
`;

const BigButton = styled.button`
  display: flex;
  flex-direction: column;
  align-items: center;
  flex: none;
  width: ${(props) => props.$width}px;
  padding-top: 3px;

  > svg {
    margin-bottom: 3px;
  }

  span {
    height: 16px;
    white-space: nowrap;
  }

  span svg {
    display: inline-block;
    vertical-align: 2px;
  }

  &:disabled {
    color: #a9a9a9;
  }
`;

const Stack = styled.div`
  display: flex;
  flex-direction: column;
  gap: 3px;
  width: ${(props) => (props.$width ? `${props.$width}px` : "auto")};
  padding-left: ${(props) => (props.$width ? "0" : "3px")};
`;

const SmallButton = styled.button`
  display: flex;
  align-items: center;
  gap: 4px;
  height: 20px;

  > svg:nth-of-type(2) {
    margin-left: ${(props) => (props.$wide ? "auto" : "0")};
  }

  ${(props) => props.$wide && "width: 87px;"}
`;

const Collapse = styled.button`
  align-self: flex-end;
  margin-left: auto;
  padding: 4px 9px;
`;

const MessageBar = styled.section`
  display: flex;
  align-items: center;
  flex: none;
  height: 29px;
  padding: 0 10px 0 9px;
  border-bottom: 1px solid #d8d3a6;
  background: #fdf6b4;
  white-space: nowrap;

  strong {
    margin: 0 9px;
    font-weight: 400;
  }

  a {
    margin-right: auto;
    font-family: Roboto, sans-serif;
    color: inherit;
    text-underline-offset: 2px;
  }
`;

const MessageButton = styled.button`
  flex: none;
  width: ${(props) => props.$width}px;
  height: 22px;
  margin-right: 9px;
  border: 1px solid #a6a6a6;
  background: #fdfdfd;
`;

const CloseMessage = styled.button`
  margin-left: 139px;
`;

const FormulaBar = styled.section`
  display: flex;
  align-items: center;
  flex: none;
  height: 46px;
  padding: 0 5px;
  font-size: 13px;

  > svg {
    margin: 0 13px 0 14px;
  }
`;

const NameBox = styled.div`
  display: flex;
  align-items: center;
  flex: none;
  width: 102px;
  height: 26px;
  padding: 0 5px 0 6px;
  border: 1px solid #c6c6c6;
  background: #fdfdfd;
  color: #444;

  input {
    flex: 1;
    min-width: 0;
  }
`;

const FormulaButtons = styled(NameBox)`
  width: 110px;
  padding: 0;
`;

const FormulaBox = styled(NameBox)`
  flex: 1;
  margin-left: 3px;
  padding: 0 3px 0 11px;
`;

const Fx = styled.i`
  font: italic 700 15px/16px "Liberation Serif", serif;

  sub {
    font-size: 11px;
    line-height: 0;
    vertical-align: baseline;
  }
`;

const Workspace = styled.main`
  display: flex;
  flex: 1;
  min-height: 0;
`;

const SheetView = styled.div`
  flex: 1;
  min-width: 0;
  overflow: hidden;
  border-right: 1px solid #9b9b9b;
  border-bottom: 1px solid #9b9b9b;
`;

const Sheet = styled.table`
  width: 1366px;
  table-layout: fixed;
  border-collapse: separate;
  border-spacing: 0;
  background: #fff;
  color: #111;
  font-size: 15px;
  line-height: 22px;

  th, td {
    height: 23px;
    padding: 0;
    font-weight: 400;
  }
`;

const ColumnHead = styled.th`
  border-right: 1px solid #b5b5b5;
  border-bottom: 1px solid #9b9b9b;
  background: ${(props) => (props.$selected ? "#d2f0e0" : "#e6e6e6")};
  color: ${(props) => (props.$selected ? "#217346" : "#262626")};
  font-size: 14px;
`;

const CornerCell = styled.th`
  width: 34px;
  border-bottom: 1px solid #9b9b9b;
  background: #e6e6e6;

  svg {
    margin: 4px 0 0 15px;
  }
`;

const RowHead = styled.th`
  border-right: 1px solid #217346;
  border-bottom: 1px solid #b5b5b5;
  background: #d4d4d4;
  color: #3f6b53;
  font-size: 14px;
`;

const Cell = styled.td`
  overflow: hidden;
  white-space: nowrap;
  text-align: ${(props) => (props.$number ? "right" : "left")};
  border-right: 1px solid ${(props) => (props.$selected ? "#217346" : "#d2d2d2")};
  border-bottom: 1px solid ${(props) => (props.$selected ? "#b5b5b5" : "#d2d2d2")};
  border-left: ${(props) => (props.$selected ? "1px solid #217346" : "0")};
  background: ${(props) => (props.$selected ? "#c6c6c6" : "#fff")};

  && {
    padding: 0 ${(props) => (props.$selected ? 0 : 3)}px 0 ${(props) => (props.$selected ? 2 : 3)}px;
  }

  &:nth-child(3) {
    border-left: 1px solid #217346;
  }

  &&:nth-child(3) {
    padding-left: 2px;
  }
`;

const VerticalScroll = styled.div`
  display: flex;
  flex-direction: column;
  flex: none;
  width: 21px;
  padding: 2px 3px 0;
`;

const HorizontalScroll = styled.div`
  display: flex;
  flex: none;
  align-self: center;
  width: 506px;
  height: 15px;
  margin-right: 21px;
`;

const ScrollButton = styled.button`
  display: flex;
  align-items: center;
  justify-content: center;
  flex: none;
  width: 15px;
  height: 15px;
  border: 1px solid #9b9b9b;
  background: #fff;
`;

const Track = styled.div`
  flex: ${(props) => props.$grow} 0 0;
  background: #f1f1f1;
`;

const Thumb = styled.div`
  flex: ${(props) => props.$grow} 0 0;
  border: 1px solid #9b9b9b;
  background: #fff;
`;

const SheetTabs = styled.section`
  display: flex;
  align-items: center;
  flex: none;
  height: 27px;

  > svg {
    margin-left: auto;
    margin-right: 14px;
  }
`;

const SheetNav = styled.div`
  display: flex;
  width: 100px;
  padding-left: 15px;
`;

const SheetTab = styled.button`
  align-self: flex-start;
  width: 74px;
  height: 24px;
  padding-top: 2px;
  border: solid #9b9b9b;
  border-width: 0 1px;
  border-bottom: 2px solid #217346;
  background: #fff;
  color: #217346;
  font-size: 13px;
  font-weight: 600;
`;

const NewSheet = styled.button`
  margin-left: 32px;
`;

const StatusBar = styled.footer`
  display: flex;
  align-items: center;
  flex: none;
  height: 22px;
  padding-right: 7px;
  border-top: 1px solid #c6c6c6;
  background: #f1f1f1;
  font-size: 11px;
`;

const StatusText = styled.span`
  width: 58px;
  padding-left: 7px;
`;

const Access = styled.span`
  display: flex;
  align-items: center;
  gap: 2px;
  margin-left: 16px;
`;

const Count = styled.span`
  margin-left: auto;
  padding-right: 19px;
`;

const ViewButton = styled.button`
  display: flex;
  align-items: center;
  justify-content: center;
  width: 40px;
  height: 21px;
  background: ${(props) => (props.$active ? "#c6c6c6" : "none")};
`;

const ZoomSlider = styled.input`
  width: 100px;
  height: 15px;
  appearance: none;

  &::-webkit-slider-runnable-track {
    height: 11px;
    background: linear-gradient(#444, #444) center / 100% 1px no-repeat;
  }

  &::-webkit-slider-thumb {
    appearance: none;
    width: 5px;
    height: 11px;
    background: #444;
  }
`;

const ZoomValue = styled.span`
  width: 37px;
  text-align: right;
`;

const Taskbar = styled.footer`
  display: flex;
  align-items: center;
  flex: none;
  height: 40px;
  background: linear-gradient(90deg, #001820, #000a1c 60%, #020617);
  color: #fff;
`;

const TaskButton = styled.button`
  display: flex;
  align-items: center;
  justify-content: center;
  position: relative;
  flex: none;
  width: 48px;
  height: 40px;
  background: ${(props) => (props.$active ? "#36444c" : "none")};

  &::after {
    content: "";
    display: ${(props) => (props.$open ? "block" : "none")};
    position: absolute;
    bottom: 0;
    left: ${(props) => (props.$active ? "0" : "4px")};
    right: ${(props) => (props.$active ? "0" : "4px")};
    height: 2px;
    background: #76b9ed;
  }
`;

const AppButtons = styled.div`
  display: flex;
  gap: 1px;
  padding-left: 3px;
`;

const SearchBox = styled.label`
  display: flex;
  align-items: center;
  flex: none;
  width: 288px;
  height: 40px;
  padding: 0 4px 0 12px;
  border: 1px solid #c6c6c6;
  border-width: 1px 0;
  background: #f2f2f2;
  color: #333;

  input {
    flex: 1;
    min-width: 0;
    margin-left: 11px;
    padding-top: 2px;
    font-size: 14px;
  }

  input::placeholder {
    color: #444;
    opacity: 1;
  }
`;

const Tray = styled.div`
  display: flex;
  align-items: center;
  height: 40px;
  margin-left: auto;
`;

const Clock = styled.time`
  display: flex;
  flex-direction: column;
  align-items: center;
  width: 64px;
  line-height: 18px;
`;

const ShowDesktop = styled.button`
  width: 5px;
  height: 40px;
  margin-left: 6px;
  border-left: 1px solid #5c6370;
`;

const Watermark = styled.div`
  display: flex;
  align-items: center;
  justify-content: space-between;
  position: absolute;
  right: 48px;
  bottom: 47px;
  width: 194px;
  height: 66px;
  color: rgba(255, 255, 255, 0.8);
  font: 33px/40px Roboto, sans-serif;
  text-shadow: 0 0 2px rgba(0, 0, 0, 0.35);
  pointer-events: none;

  svg {
    filter: drop-shadow(0 0 1px rgba(0, 0, 0, 0.3));
  }
`;
